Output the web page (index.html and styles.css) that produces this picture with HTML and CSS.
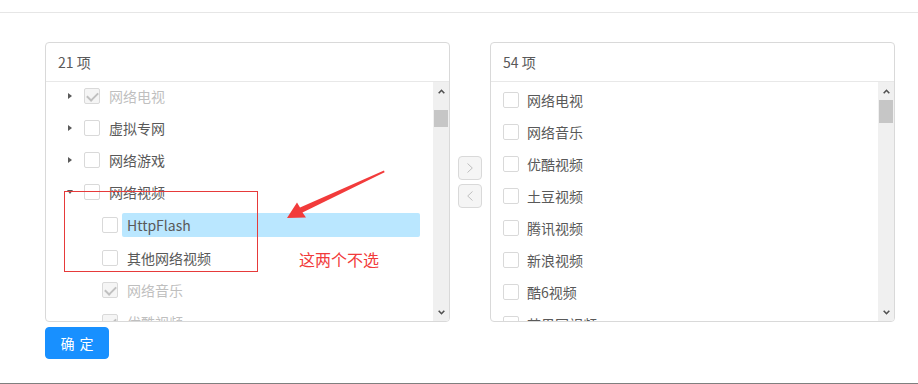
FILE: index.html
```html
<!DOCTYPE html>
<html lang="zh">
<head>
<meta charset="utf-8">
<link rel="stylesheet" href="styles.css">
</head>
<body>
<div class="topline"></div>
<main class="page">
  <div class="transfer">
    <section class="panel">
      <div class="panel-header">21 项</div>
      <div class="panel-body">
        <div class="tree">
          <div class="row"><span class="sw sw-right"></span><span class="cb cb-checked"></span><span class="label disabled">网络电视</span></div>
          <div class="row"><span class="sw sw-right"></span><span class="cb"></span><span class="label">虚拟专网</span></div>
          <div class="row"><span class="sw sw-right"></span><span class="cb"></span><span class="label">网络游戏</span></div>
          <div class="row"><span class="sw sw-down"></span><span class="cb"></span><span class="label">网络视频</span></div>
          <div class="row row-child row-tall"><span class="sw"></span><span class="cb"></span><span class="label selected">HttpFlash</span></div>
          <div class="row row-child row-tall"><span class="sw"></span><span class="cb"></span><span class="label">其他网络视频</span></div>
          <div class="row row-child"><span class="sw"></span><span class="cb cb-checked"></span><span class="label disabled">网络音乐</span></div>
          <div class="row row-child"><span class="sw"></span><span class="cb cb-checked"></span><span class="label disabled">优酷视频</span></div>
        </div>
        <div class="scrollbar">
          <div class="sb-btn"><svg width="7" height="5" viewBox="0 0 7 5"><polyline points="0.7,4.3 3.5,1.3 6.3,4.3" fill="none" stroke="#505050" stroke-width="1.6"/></svg></div>
          <div class="sb-track"><div class="sb-thumb thumb-left"></div></div>
          <div class="sb-btn"><svg width="7" height="5" viewBox="0 0 7 5"><polyline points="0.7,0.7 3.5,3.7 6.3,0.7" fill="none" stroke="#505050" stroke-width="1.6"/></svg></div>
        </div>
      </div>
    </section>

    <div class="ops">
      <div class="op-btn"><svg width="6" height="10" viewBox="0 0 6 10"><polyline points="0.5,0.5 5.3,5 0.5,9.5" fill="none" stroke="#bfbfbf" stroke-width="1"/></svg></div>
      <div class="op-btn"><svg width="6" height="10" viewBox="0 0 6 10"><polyline points="5.5,0.5 0.7,5 5.5,9.5" fill="none" stroke="#bfbfbf" stroke-width="1"/></svg></div>
    </div>

    <section class="panel">
      <div class="panel-header">54 项</div>
      <div class="panel-body">
        <ul class="list">
          <li class="item"><span class="cb"></span>网络电视</li>
          <li class="item"><span class="cb"></span>网络音乐</li>
          <li class="item"><span class="cb"></span>优酷视频</li>
          <li class="item"><span class="cb"></span>土豆视频</li>
          <li class="item"><span class="cb"></span>腾讯视频</li>
          <li class="item"><span class="cb"></span>新浪视频</li>
          <li class="item"><span class="cb"></span>酷6视频</li>
          <li class="item"><span class="cb"></span>芒果网视频</li>
        </ul>
        <div class="scrollbar">
          <div class="sb-btn"><svg width="7" height="5" viewBox="0 0 7 5"><polyline points="0.7,4.3 3.5,1.3 6.3,4.3" fill="none" stroke="#505050" stroke-width="1.6"/></svg></div>
          <div class="sb-track"><div class="sb-thumb thumb-right"></div></div>
          <div class="sb-btn"><svg width="7" height="5" viewBox="0 0 7 5"><polyline points="0.7,0.7 3.5,3.7 6.3,0.7" fill="none" stroke="#505050" stroke-width="1.6"/></svg></div>
        </div>
      </div>
    </section>
  </div>
  <button class="btn-primary" type="button">确<span class="sp"></span>定</button>
</main>
<div class="bottomline"></div>

<div class="annot-box"></div>
<div class="annot-text">这两个不选</div>
<svg class="annot-arrow" width="918" height="384" viewBox="0 0 918 384">
  <polygon points="287,218 297,202.5 300,207.5 384,170.5 384.6,172.2 302.5,212.5 306,217.5" fill="#f23b3b"/>
</svg>
</body>
</html>
```

FILE: styles.css
```css
* { box-sizing: border-box; }

html, body {
  margin: 0;
  padding: 0;
  background: #fff;
}

body {
  position: relative;
  height: 384px;
  display: flex;
  flex-direction: column;
  font-family: "Noto Sans CJK SC", "Noto Sans", sans-serif;
  font-size: 14px;
  color: #595959;
  overflow: hidden;
}

.topline {
  height: 13px;
  border-bottom: 1px solid #e6e6e6;
}

.page {
  flex: 1;
  padding: 29px 0 0 45px;
}

.bottomline {
  height: 1px;
  background: #7f7f7f;
}

.transfer {
  display: flex;
  align-items: center;
}

.panel {
  width: 405px;
  height: 280px;
  border: 1px solid #d9d9d9;
  border-radius: 4px;
  display: flex;
  flex-direction: column;
  overflow: hidden;
}

.panel-header {
  height: 39px;
  line-height: 38px;
  padding: 0 12px;
  border-bottom: 1px solid #e8e8e8;
  color: #595959;
  flex: none;
}

.panel-body {
  flex: 1;
  display: flex;
  overflow: hidden;
}

/* tree */
.tree {
  flex: 1;
  margin-top: -2px;
  padding: 0 13px 0 16px;
  overflow: hidden;
}

.row {
  height: 32px;
  display: flex;
  align-items: center;
}

.row-tall { height: 33px; }

.row-child { padding-left: 18px; }

.sw {
  width: 16px;
  height: 24px;
  flex: none;
  position: relative;
}

.sw-right::before,
.sw-down::before {
  content: "";
  position: absolute;
  width: 0;
  height: 0;
}

.sw-right::before {
  left: 6px;
  top: 9px;
  border-left: 4px solid #5a5a5a;
  border-top: 3px solid transparent;
  border-bottom: 3px solid transparent;
}

.sw-down::before {
  left: 5px;
  top: 10px;
  border-top: 4px solid #5a5a5a;
  border-left: 3px solid transparent;
  border-right: 3px solid transparent;
}

.cb {
  width: 16px;
  height: 16px;
  flex: none;
  border: 1px solid #d9d9d9;
  border-radius: 2px;
  background: #fff;
  position: relative;
}

.row .cb { margin: 0 4px 0 6px; }

.cb-checked {
  background: #f5f5f5;
}

.cb-checked::after {
  content: "";
  position: absolute;
  left: 4px;
  top: 1px;
  width: 5px;
  height: 9px;
  border-right: 2px solid #c0c0c0;
  border-bottom: 2px solid #c0c0c0;
  transform: rotate(45deg);
}

.label {
  height: 24px;
  line-height: 24px;
  padding: 0 5px;
  border-radius: 2px;
  white-space: nowrap;
  color: #595959;
}

.label.disabled { color: #bfbfbf; }

.label.selected {
  flex: 1;
  background: #bae7ff;
}

/* right list */
.list {
  flex: 1;
  list-style: none;
  margin: 0;
  padding: 2px 0 0 12px;
  overflow: hidden;
}

.item {
  height: 32px;
  display: flex;
  align-items: center;
  white-space: nowrap;
  color: #595959;
}

.item .cb { margin-right: 8px; }

/* fake scrollbar */
.scrollbar {
  width: 16px;
  flex: none;
  background: #f0f0f0;
  display: flex;
  flex-direction: column;
  padding-top: 1px;
}

.sb-btn {
  height: 17px;
  display: flex;
  align-items: center;
  justify-content: center;
  flex: none;
}

.sb-track {
  flex: 1;
}

.sb-thumb {
  background: #c6c6c6;
  margin: 0 1px;
}

.thumb-left { margin-top: 10px; height: 17px; }
.thumb-right { margin-top: 0; height: 23px; }

/* operation buttons */
.ops {
  display: flex;
  flex-direction: column;
  gap: 4px;
  margin: 0 8px;
}

.op-btn {
  width: 24px;
  height: 24px;
  border: 1px solid #d9d9d9;
  border-radius: 4px;
  background: #f5f5f5;
  display: flex;
  align-items: center;
  justify-content: center;
}

/* confirm button */
.btn-primary {
  display: flex;
  align-items: center;
  justify-content: center;
  margin-top: 5px;
  width: 64px;
  height: 32px;
  padding: 0;
  border: 1px solid #1890ff;
  border-radius: 4px;
  background: #1890ff;
  color: #fff;
  font-family: "Noto Sans CJK SC", "Noto Sans", sans-serif;
  font-size: 14px;
  line-height: 1;
}

.btn-primary .sp {
  display: inline-block;
  width: 5px;
}

/* annotations */
.annot-box {
  position: absolute;
  left: 64px;
  top: 191px;
  width: 194px;
  height: 81px;
  border: 1px solid #e63a3a;
}

.annot-text {
  position: absolute;
  left: 299px;
  top: 248px;
  font-size: 16px;
  line-height: 22px;
  color: #f23b3b;
  white-space: nowrap;
}

.annot-arrow {
  position: absolute;
  left: 0;
  top: 0;
  pointer-events: none;
}
```
